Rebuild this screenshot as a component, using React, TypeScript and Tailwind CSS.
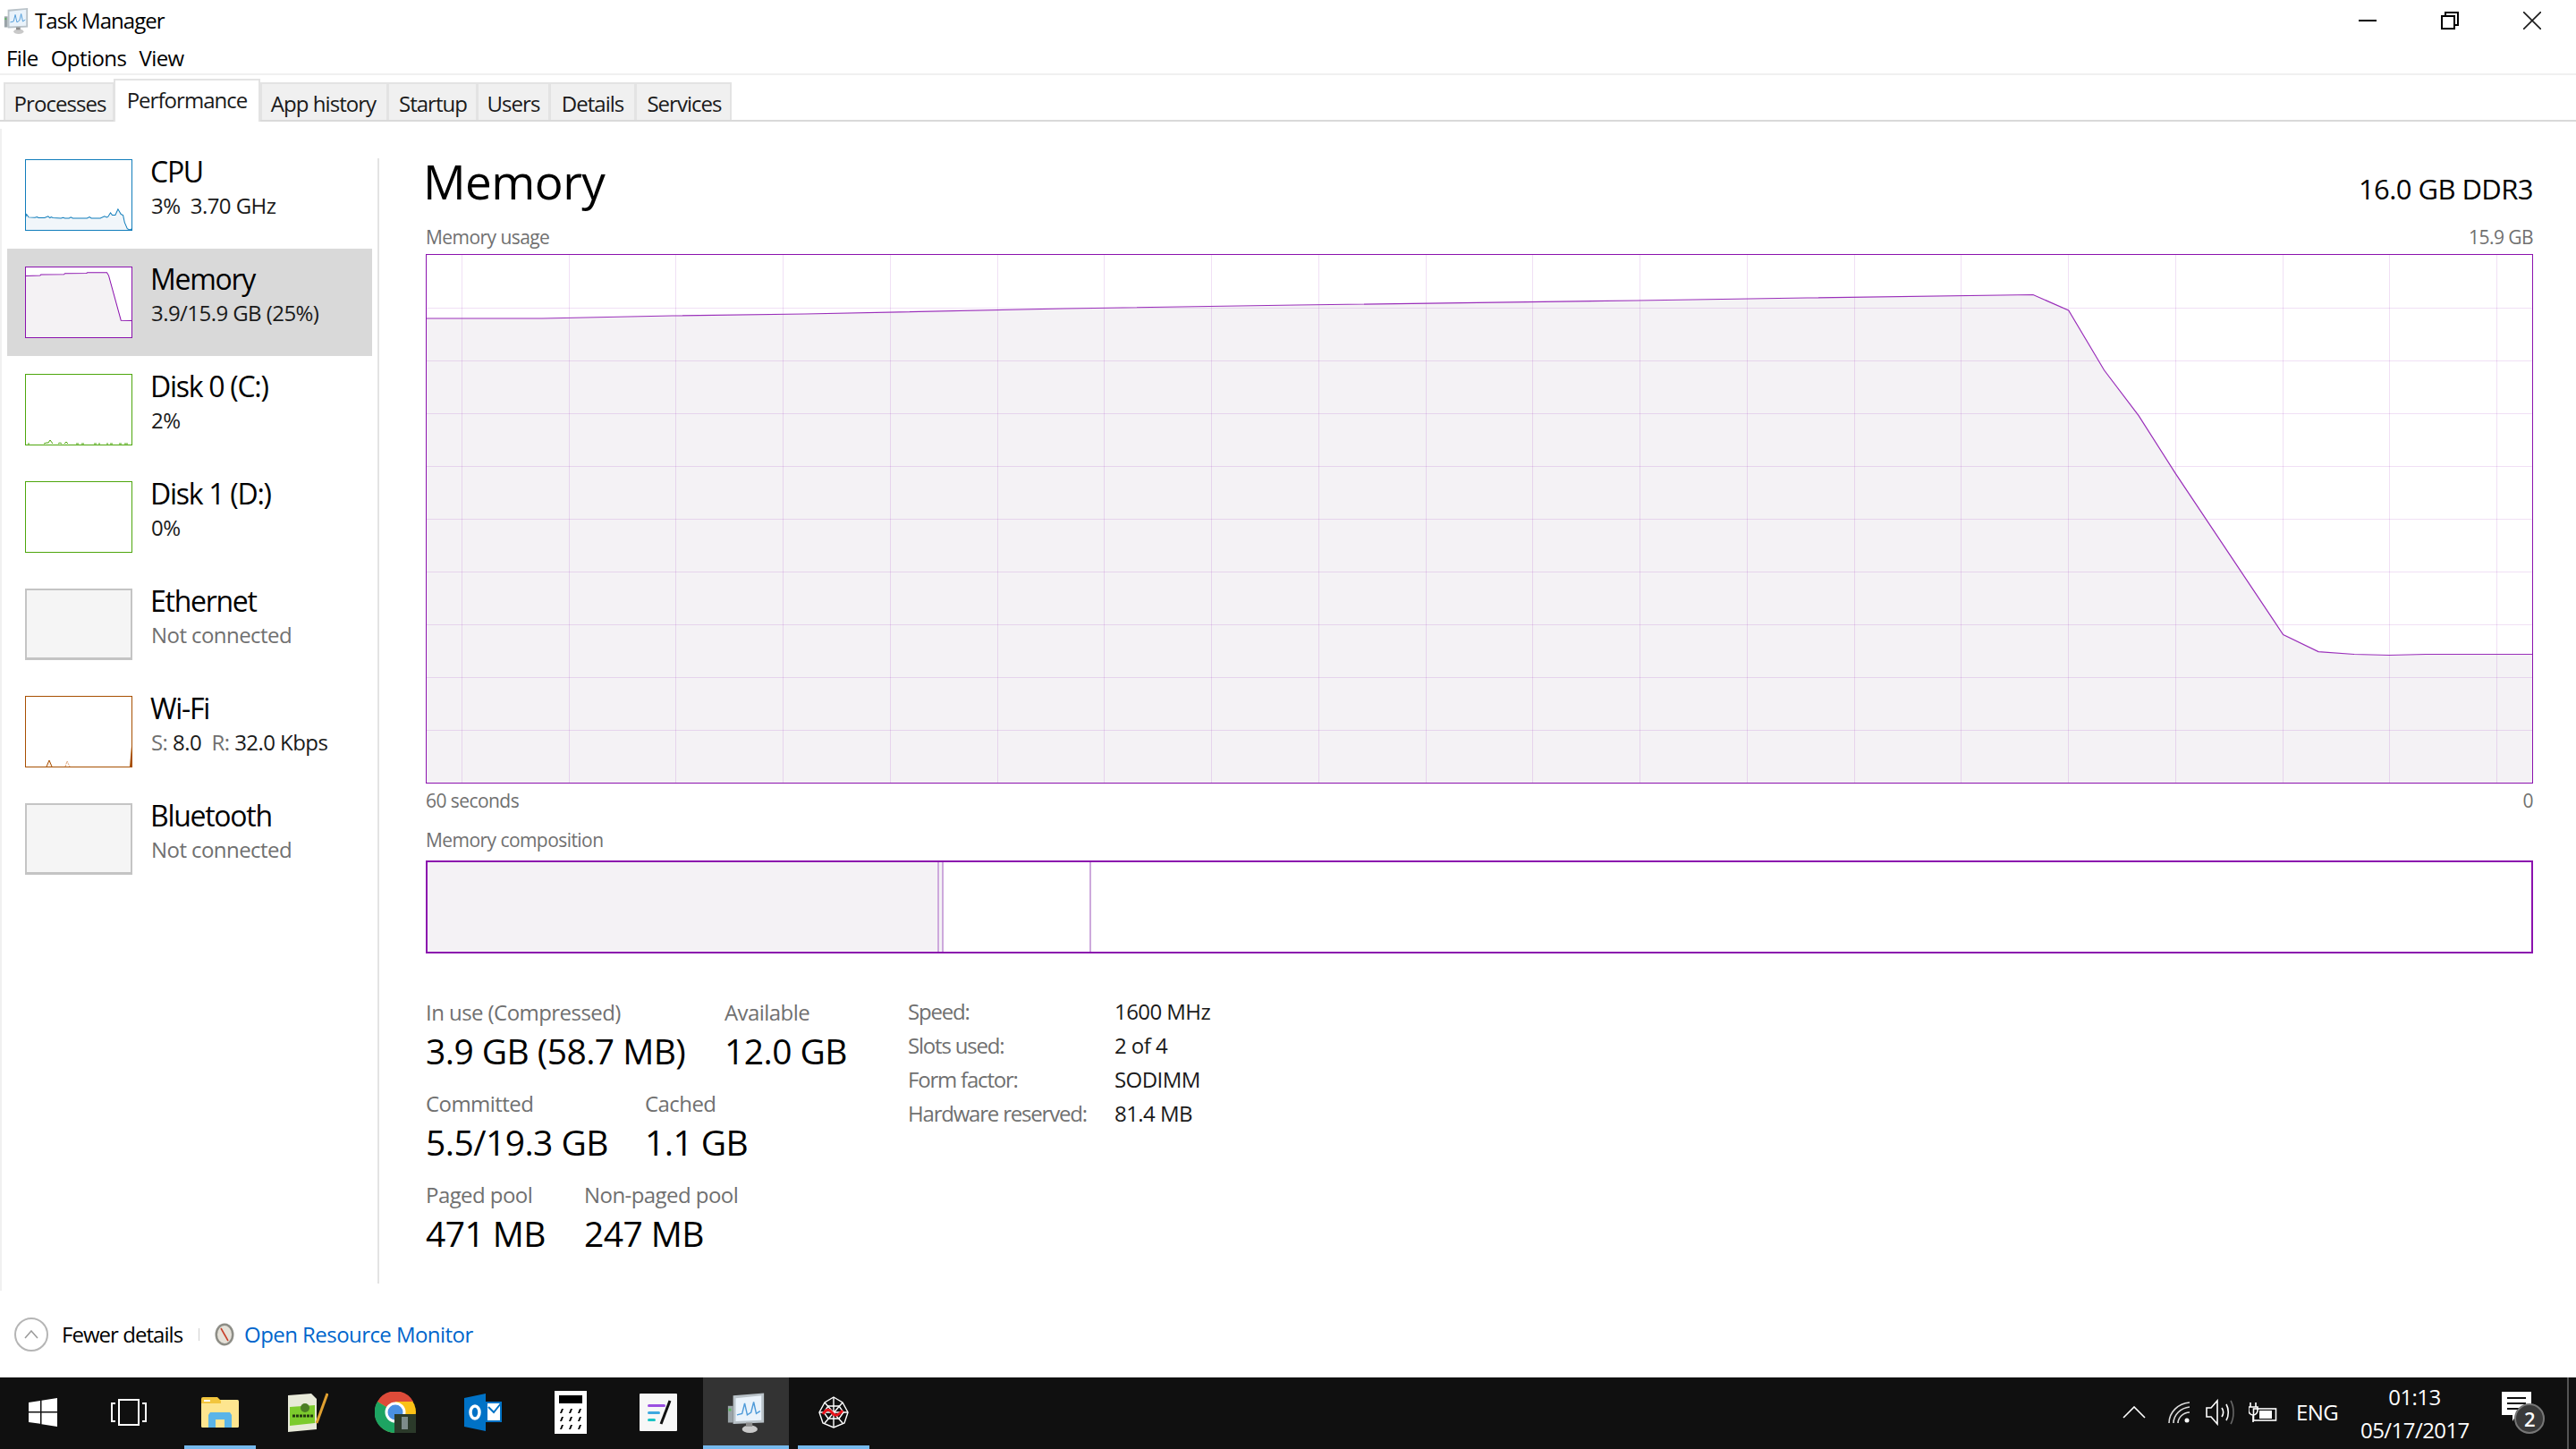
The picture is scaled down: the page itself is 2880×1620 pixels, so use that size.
import React from "react";

const PURPLE = "#8b12ae";

// --- THUMBNAILS (viewBox uses pixels read off the reference crops) ---
function Thumb({ className, children, viewBox }: { className: string; children?: React.ReactNode; viewBox?: string }) {
  return (
    <div className={`w-[120px] h-[80px] shrink-0 box-border overflow-hidden ${className}`}>
      {viewBox && (
        <svg width="118" height="78" viewBox={viewBox} preserveAspectRatio="none" className="block">
          {children}
        </svg>
      )}
    </div>
  );
}

const cpuLine =
  "86,280 90,268 97,278 118,279 125,277 130,280 150,280 162,275 168,280 172,277 178,280 205,281 212,279 218,281 232,281 238,278 244,281 292,281 300,277 306,281 336,281 350,275 358,278 362,276 370,263 376,271 386,271 395,251 405,268 412,271 417,295 426,316 434,320 443,316";
const memLine = "86,476 135,475 138,472 215,471 218,468 290,467 293,465 358,465 364,475 405,624 443,625";

function CpuThumb() {
  return (
    <Thumb className="border border-[#117dbb] bg-white" viewBox="88 88 352 232">
      <polygon points={`${cpuLine} 443,323 86,323`} fill="#f1f6fa" />
      <polyline points={cpuLine} fill="none" stroke="#117dbb" strokeWidth="3" />
    </Thumb>
  );
}

function MemThumb() {
  return (
    <Thumb className="border border-[#8b12ae] bg-white" viewBox="88 448 352 232">
      <polygon points={`${memLine} 443,683 86,683`} fill="#f4f2f4" />
      <polyline points={memLine} fill="none" stroke={PURPLE} strokeWidth="3" />
    </Thumb>
  );
}

function DiskZeroThumb() {
  return (
    <Thumb className="border border-[#4da60c] bg-white" viewBox="0 0 118 78">
      <path
        d="M2 77h2M20 77l3-1 2 0 2-3 3 4M36 77l2-1 2 1M43 77l2-2 2 2M56 77h3M62 77h3M76 77h3M81 77h2M90 77h2M94 77h3M104 77h3M110 77h4"
        fill="none"
        stroke="#4da60c"
        strokeWidth="1"
      />
    </Thumb>
  );
}

function WifiThumb() {
  return (
    <Thumb className="border border-[#a74f01] bg-white" viewBox="0 0 118 78">
      <path d="M23 78l3-7 3 7" fill="#fbeee2" stroke="#a74f01" strokeWidth="1" />
      <path d="M44 78l2-6 3 6" fill="none" stroke="#d99a6a" strokeWidth="1" strokeDasharray="2 1" />
      <path d="M116 78l2-23v23z" fill="#a74f01" />
    </Thumb>
  );
}

// --- SIDEBAR ---
function SideRow({
  thumb,
  name,
  sub,
  selected,
}: {
  thumb: React.ReactNode;
  name: string;
  sub: React.ReactNode;
  selected?: boolean;
}) {
  return (
    <div className={`ml-[6px] w-[408px] h-[120px] flex pl-[20px] pt-[20px] gap-[20px] ${selected ? "bg-[#d9d9d9]" : ""}`}>
      {thumb}
      <div className="-mt-[5px]">
        <div className="text-[32px] leading-[38px] h-[39px] tracking-[-0.04em] text-black">{name}</div>
        <div className="text-[24px] leading-[36px] pl-[1px] text-[#1a1a1a]">{sub}</div>
      </div>
    </div>
  );
}

const Gray = ({ children }: { children: React.ReactNode }) => <span className="text-[#707070]">{children}</span>;

// --- MAIN CHART ---
const chartTop = [344, 403, 462, 521, 580, 639, 698, 757, 816];
const chartCols = Array.from({ length: 20 }, (_, i) => 2791.5 - i * 119.74);
const usage =
  "477,356 606,356 752,353 900,351 1190,345 1450,341 1830,336 2020,333 2273,329.5 2312.7,347 2352.6,414 2391,464.6 2432.4,529.6 2552.6,709.5 2592,728.6 2632,731.5 2671,732.5 2712,731.5 2831,731.5";

function UsageChart() {
  return (
    <div className="w-[2356px] h-[592px] box-border border border-[#8b12ae] bg-white">
      <svg width="2354" height="590" viewBox="477 285 2354 590" className="block">
        <polygon points={`${usage} 2831,875 477,875`} fill="#f4f2f5" />
        <g stroke={PURPLE} strokeOpacity="0.13" strokeWidth="1" shapeRendering="crispEdges">
          {chartTop.map((y) => (
            <line key={y} x1="477" x2="2831" y1={y + 0.5} y2={y + 0.5} />
          ))}
          {chartCols.map((x) => (
            <line key={x} x1={x} x2={x} y1="285" y2="875" />
          ))}
        </g>
        <polyline points={usage} fill="none" stroke="#9a2fba" strokeWidth="1.2" />
      </svg>
    </div>
  );
}

function Composition() {
  return (
    <div className="w-[2356px] h-[104px] box-border border-2 border-[#8b12ae] flex bg-white">
      <div className="w-[572px] bg-[#f4f2f5] border-r-2 border-[#cda9dc]" />
      <div className="w-[5px] bg-[#f4f2f5] border-r-2 border-[#cda9dc]" />
      <div className="w-[165px] border-r-2 border-[#cda9dc]" />
    </div>
  );
}

function Stat({ label, value, className }: { label: string; value: string; className: string }) {
  return (
    <div className={className}>
      <div className="text-[24px] leading-[32px] text-[#707070]">{label}</div>
      <div className="text-[39px] leading-[54px] h-[56px] text-black">{value}</div>
    </div>
  );
}

function Spec({ label, value }: { label: string; value: string }) {
  return (
    <div className="flex h-[38px] items-center text-[24px]">
      <div className="w-[231px] text-[#707070] tracking-[-0.05em]">{label}</div>
      <div className="text-[#1a1a1a]">{value}</div>
    </div>
  );
}

// --- SMALL ICONS ---
function MonitorIcon({ size }: { size: number }) {
  return (
    <svg width={size} height={size} viewBox="0 0 32 32">
      <rect x="2" y="11" width="4" height="13" fill="#9aa3a8" />
      <rect x="2.5" y="13" width="2" height="2" fill="#5cb85c" />
      <polygon points="6,3 30,1 30,24 6,25" fill="#b9c2c8" />
      <polygon points="8,5 28,3 28,22 8,23" fill="#eaf3fb" />
      <polyline points="9,18 13,17 15,9 17,18 20,16 22,8 24,17 27,15" fill="none" stroke="#4f9bd9" strokeWidth="1" />
      <ellipse cx="19" cy="29" rx="6" ry="3" fill="#c9c9c9" />
      <rect x="16" y="24" width="5" height="3" fill="#8c8c8c" />
    </svg>
  );
}

function ResourceIcon() {
  return (
    <svg width="22" height="26" viewBox="0 0 22 26" className="shrink-0">
      <ellipse cx="11" cy="13" rx="10.5" ry="12.5" fill="#8d8d86" />
      <ellipse cx="11" cy="13" rx="8" ry="10" fill="#e5e1d8" />
      <path d="M7 6l8 14" stroke="#c8402a" strokeWidth="1.6" />
    </svg>
  );
}

function TaskItem({ active, on, children }: { active?: boolean; on?: boolean; children: React.ReactNode }) {
  return (
    <div className={`w-[96px] h-[80px] flex flex-col items-center ${active ? "bg-[#333333]" : ""}`}>
      <div className="h-[76px] pt-[2px] flex items-center justify-center">{children}</div>
      <div className={`h-[4px] ${active ? "w-[96px] bg-[#76b9ed]" : on ? "w-[80px] bg-[#76b9ed]" : ""}`} />
    </div>
  );
}

export default function App() {
  return (
    <div className="w-[2880px] h-[1620px] overflow-hidden bg-white flex flex-col font-['Open_Sans',sans-serif] tracking-[-0.035em] text-black">
      {/* title bar */}
      <div className="h-[46px] flex items-center justify-between">
        <div className="flex items-center pl-[3px] gap-[6px]">
          <MonitorIcon size={30} />
          <span className="text-[24px] tracking-[-0.04em]">Task Manager</span>
        </div>
        <div className="flex pr-[3px]">
          <div className="w-[92px] flex justify-center">
            <svg width="20" height="20" viewBox="0 0 20 20"><path d="M0 10h20" stroke="#000" strokeWidth="2" /></svg>
          </div>
          <div className="w-[92px] flex justify-center">
            <svg width="20" height="20" viewBox="0 0 20 20" fill="none" stroke="#000" strokeWidth="2"><rect x="1" y="5" width="14" height="14" /><path d="M5 5V1h14v14h-4" /></svg>
          </div>
          <div className="w-[92px] flex justify-center">
            <svg width="20" height="20" viewBox="0 0 20 20"><path d="M0 0l20 20M20 0L0 20" stroke="#1a1a1a" strokeWidth="1.6" /></svg>
          </div>
        </div>
      </div>

      {/* menu */}
      <div className="h-[38px] border-b-2 border-[#f0f0f0] flex items-center pl-[7px] pt-[2px] gap-[14px] text-[24px]">
        <span>File</span>
        <span>Options</span>
        <span>View</span>
      </div>

      {/* tabs */}
      <div className="h-[52px] border-b-2 border-[#d9d9d9] flex items-end pl-[4px] text-[24px] text-[#1a1a1a] tracking-[-0.04em]">
        {[
          ["Processes", "w-[123px] pl-[2px]"],
          ["Performance", ""],
          ["App history", "w-[142px] pr-[2px]"],
          ["Startup", "w-[100px] pl-[1px]"],
          ["Users", "w-[81px]"],
          ["Details", "w-[96px]"],
          ["Services", "w-[108px] pl-[2px]"],
        ].map(([label, w]) =>
          label === "Performance" ? (
            <div key={label} className="w-[164px] h-[48px] -mb-[2px] box-border border-x-2 border-t-2 border-[#e3e3e3] bg-white flex justify-center pt-[2px] leading-[40px]">
              {label}
            </div>
          ) : (
            <div key={label} className={`${w} h-[42px] box-border border-l-2 border-t-2 border-r last:border-r-2 border-[#e3e3e3] bg-[#f0f0f0] flex justify-center leading-[44px]`}>
              {label}
            </div>
          ),
        )}
      </div>

      {/* body */}
      <div className="flex h-[1299px] mt-[8px]">
        <div className="w-[422px] border-l-2 border-[#f0f0f0] pt-[14px] box-border">
          <SideRow thumb={<CpuThumb />} name="CPU" sub={<>3%&nbsp;&nbsp;3.70 GHz</>} />
          <SideRow thumb={<MemThumb />} name="Memory" sub="3.9/15.9 GB (25%)" selected />
          <SideRow thumb={<DiskZeroThumb />} name="Disk 0 (C:)" sub="2%" />
          <SideRow thumb={<Thumb className="border border-[#4da60c] bg-white" />} name="Disk 1 (D:)" sub="0%" />
          <SideRow
            thumb={<Thumb className="border-2 border-b-[3px] border-[#c4c4c4] bg-[#f5f5f5]" />}
            name="Ethernet"
            sub={<Gray>Not connected</Gray>}
          />
          <SideRow
            thumb={<WifiThumb />}
            name="Wi-Fi"
            sub={
              <>
                <Gray>S:</Gray> 8.0 <Gray>&nbsp;R:</Gray> 32.0 Kbps
              </>
            }
          />
          <SideRow
            thumb={<Thumb className="border-2 border-b-[3px] border-[#c4c4c4] bg-[#f5f5f5]" />}
            name="Bluetooth"
            sub={<Gray>Not connected</Gray>}
          />
        </div>
        <div className="w-[2px] mt-[33px] mb-[8px] bg-[#e3e3e3]" />

        {/* main */}
        <div className="w-[2456px] pl-[52px] pr-[48px] box-border">
          <div className="h-[106px] flex justify-between">
            <div className="text-[53px] leading-[74px] pt-[22px] -ml-[3px]">Memory</div>
            <div className="text-[31px] leading-[44px] pt-[45px]">16.0 GB DDR3</div>
          </div>
          <div className="h-[34px] flex justify-between text-[21px] leading-[30px] text-[#707070]">
            <span>Memory usage</span>
            <span>15.9 GB</span>
          </div>
          <UsageChart />
          <div className="h-[40px] flex justify-between items-center text-[21px] text-[#707070]">
            <span>60 seconds</span>
            <span>0</span>
          </div>
          <div className="h-[30px] mt-[8px] mb-[8px] text-[21px] leading-[30px] text-[#707070]">Memory composition</div>
          <Composition />

          <div className="flex mt-[50px]">
            <div className="w-[539px] flex flex-col gap-[14px]">
              <div className="flex">
                <Stat className="w-[334px]" label="In use (Compressed)" value="3.9 GB (58.7 MB)" />
                <Stat className="" label="Available" value="12.0 GB" />
              </div>
              <div className="flex">
                <Stat className="w-[245px]" label="Committed" value="5.5/19.3 GB" />
                <Stat className="" label="Cached" value="1.1 GB" />
              </div>
              <div className="flex">
                <Stat className="w-[177px]" label="Paged pool" value="471 MB" />
                <Stat className="" label="Non-paged pool" value="247 MB" />
              </div>
            </div>
            <div className="-mt-[4px]">
              <Spec label="Speed:" value="1600 MHz" />
              <Spec label="Slots used:" value="2 of 4" />
              <Spec label="Form factor:" value="SODIMM" />
              <Spec label="Hardware reserved:" value="81.4 MB" />
            </div>
          </div>
        </div>
      </div>

      {/* footer */}
      <div className="h-[97px] flex items-center pl-[16px] text-[24px]">
        <div className="w-[38px] h-[38px] rounded-full border-2 border-[#b5b5b5] flex items-center justify-center">
          <svg width="16" height="10" viewBox="0 0 16 10"><path d="M1 9l7-8 7 8" fill="none" stroke="#9a9a9a" strokeWidth="1.5" /></svg>
        </div>
        <span className="ml-[15px] pt-[1px] tracking-[-0.04em]">Fewer details</span>
        <div className="w-[1px] h-[14px] bg-[#d0d0d0] ml-[18px] mr-[17px]" />
        <ResourceIcon />
        <span className="ml-[11px] pt-[1px] text-[#0066cc]">Open Resource Monitor</span>
      </div>

      {/* taskbar */}
      <div className="h-[80px] bg-[#101010] flex text-white relative">
        <div className="w-[96px] h-[80px] flex items-center justify-center pb-[2px]">
          <svg width="32" height="32" viewBox="0 0 32 32" fill="#fff">
            <path d="M0 5l13-2v12H0zM14.5 2.8L32 0v15H14.5zM0 16.5h13v12.3L0 27zM14.5 16.5H32V32l-17.5-2.8z" />
          </svg>
        </div>
        <div className="w-[102px] h-[80px] flex items-center justify-center pb-[2px] pr-[6px]">
          <svg width="40" height="30" viewBox="0 0 40 30" fill="none" stroke="#fff" strokeWidth="2">
            <rect x="9" y="1" width="22" height="28" />
            <path d="M5 5H1v20h4M35 5h4v20h-4" />
          </svg>
        </div>
        <div className="flex gap-[2px]">
          <TaskItem on>
            <svg width="42" height="34" viewBox="0 0 42 34">
              <rect y="3" width="42" height="31" rx="1.5" fill="#fde58f" />
              <path d="M0 2a2 2 0 012-2h16l4 4v3H0z" fill="#f2c53d" />
              <rect x="3" y="3" width="7" height="2" fill="#fff" />
              <path d="M8 34V20l2-3h22l2 3v14h-8V25H16v9z" fill="#5ab4e8" />
            </svg>
          </TaskItem>
          <TaskItem>
            <svg width="46" height="44" viewBox="0 0 46 44">
              <path d="M1 3l26-2 6 6v34l-32 3z" fill="#e8ead9" />
              <path d="M3 16l28-2v20l-28 3z" fill="#7ccb2d" />
              <circle cx="20" cy="17" r="5" fill="#4b7d24" />
              <path d="M6 26h24" stroke="#22380f" strokeWidth="3" strokeDasharray="3 1" />
              <path d="M45 1L33 34" stroke="#e0a030" strokeWidth="3" />
            </svg>
          </TaskItem>
          <TaskItem>
            <svg width="46" height="46" viewBox="0 0 46 46">
              <circle cx="23" cy="23" r="23" fill="#fbc116" />
              <path d="M23 23L3 11A23 23 0 0143 11H23z" fill="#dd4b39" />
              <path d="M3 11A23 23 0 0022 46l10-19-9-4z" fill="#1da462" />
              <circle cx="23" cy="23" r="10" fill="#4a90e2" stroke="#fff" strokeWidth="3" />
              <rect x="22" y="25" width="24" height="21" fill="#2b3a2a" />
              <rect x="30" y="28" width="7" height="14" fill="#7d8c8a" />
            </svg>
          </TaskItem>
          <TaskItem>
            <svg width="42" height="42" viewBox="0 0 42 42">
              <path d="M0 5L24 0v42L0 37z" fill="#0072c6" />
              <rect x="24" y="9" width="18" height="23" fill="#0072c6" />
              <path d="M26 11h14v19H26z" fill="#fff" />
              <path d="M27 15l6 6 8-10" fill="none" stroke="#0072c6" strokeWidth="2" />
              <ellipse cx="12" cy="21" rx="5" ry="7" fill="none" stroke="#fff" strokeWidth="3.5" />
            </svg>
          </TaskItem>
          <TaskItem>
            <svg width="36" height="48" viewBox="0 0 36 48">
              <rect width="36" height="48" fill="#fff" />
              <rect x="5" y="5" width="26" height="9" fill="#000" />
              <path d="M6 25l2-5h2l-2 5zM16 25l2-5h2l-2 5zM26 25l2-5h2l-2 5zM6 34l2-5h2l-2 5zM16 34l2-5h2l-2 5zM26 34l2-5h2l-2 5zM6 43l2-5h2l-2 5zM16 43l2-5h2l-2 5zM26 43l2-5h2l-2 5z" fill="#000" />
            </svg>
          </TaskItem>
          <TaskItem>
            <svg width="42" height="42" viewBox="0 0 42 42">
              <rect width="42" height="42" rx="1" fill="#f7f7f7" />
              <rect x="9" y="12" width="20" height="3" rx="1.5" fill="#9a4fe0" />
              <rect x="9" y="20" width="14" height="3" rx="1.5" fill="#3ea8e0" />
              <rect x="9" y="28" width="9" height="3" rx="1.5" fill="#19c4c4" />
              <path d="M34 8L24 34" stroke="#111" strokeWidth="3" />
            </svg>
          </TaskItem>
          <TaskItem active on>
            <MonitorIcon size={46} />
          </TaskItem>
          <TaskItem on>
            <svg width="36" height="36" viewBox="0 0 36 36" fill="none" stroke="#fff" strokeWidth="1.4">
              <path d="M18 1l10 6 6 11-4 12-12 5-12-5-4-12 6-11z" />
              <path d="M18 1v34M2 18h32M8 7l20 23M28 7L8 30" />
              <path d="M12 11h12l5 7-5 7H12l-5-7z" />
              <path d="M6 20c4-6 7-6 10-2s6 5 12-2" stroke="#e8141c" strokeWidth="3" />
            </svg>
          </TaskItem>
        </div>

        <div className="ml-auto flex items-center h-[80px] pb-[2px]">
          <svg width="26" height="14" viewBox="0 0 26 14" className="mr-[25px]">
            <path d="M1 13L13 1l12 12" fill="none" stroke="#fff" strokeWidth="1.6" />
          </svg>
          <svg width="24" height="24" viewBox="0 0 24 24" fill="none" stroke="#dcdcdc" strokeWidth="1.6" className="mr-[18px]">
            <path d="M1 24C1 12 11 2 24 1" />
            <path d="M6 24C6 15 14 7 24 6" />
            <path d="M11 24c0-6 6-12 13-12" />
            <circle cx="21" cy="21" r="2.5" fill="#fff" stroke="none" />
          </svg>
          <svg width="32" height="30" viewBox="0 0 32 30" fill="none" stroke="#fff" strokeWidth="1.6" className="mr-[16px]">
            <path d="M1 10h5l7-8v26l-7-8H1z" />
            <path d="M18 10c2 3 2 7 0 10M23 6c3 5 3 13 0 18" />
            <path d="M28 2c4 7 4 19 0 26" stroke="#666" />
          </svg>
          <svg width="32" height="22" viewBox="0 0 32 22" className="mr-[21px]">
            <path d="M2 0v5M8 0v5M0 5h10v4a5 5 0 01-10 0zM5 14v8" fill="none" stroke="#fff" strokeWidth="1.6" />
            <rect x="5.5" y="6" width="25" height="13" fill="none" stroke="#fff" strokeWidth="1.6" transform="translate(0 1)" />
            <rect x="12" y="9" width="14" height="9" fill="#fff" />
          </svg>
          <span className="text-[24px] w-[72px]">ENG</span>
          <div className="w-[121px] text-center text-[24px] leading-[37px] mt-[2px]">
            <div>01:13</div>
            <div>05/17/2017</div>
          </div>
          <div className="w-[48px] h-[46px] ml-[37px] mr-[25px] relative">
            <svg width="33" height="33" viewBox="0 0 33 33" className="block">
              <path d="M0 0h33v26H16l-4 7v-7H0z" fill="#fff" />
              <path d="M6 7h21M6 13h21M6 19h14" stroke="#101010" strokeWidth="2" />
            </svg>
            <div className="absolute left-[14px] top-[13px] w-[34px] h-[34px] rounded-full bg-[#3a3a3a] border-2 border-[#777] flex items-center justify-center text-[22px] font-semibold">
              2
            </div>
          </div>
          <div className="w-[2px] h-[80px] bg-[#555] self-start" />
          <div className="w-[8px]" />
        </div>
      </div>
    </div>
  );
}
